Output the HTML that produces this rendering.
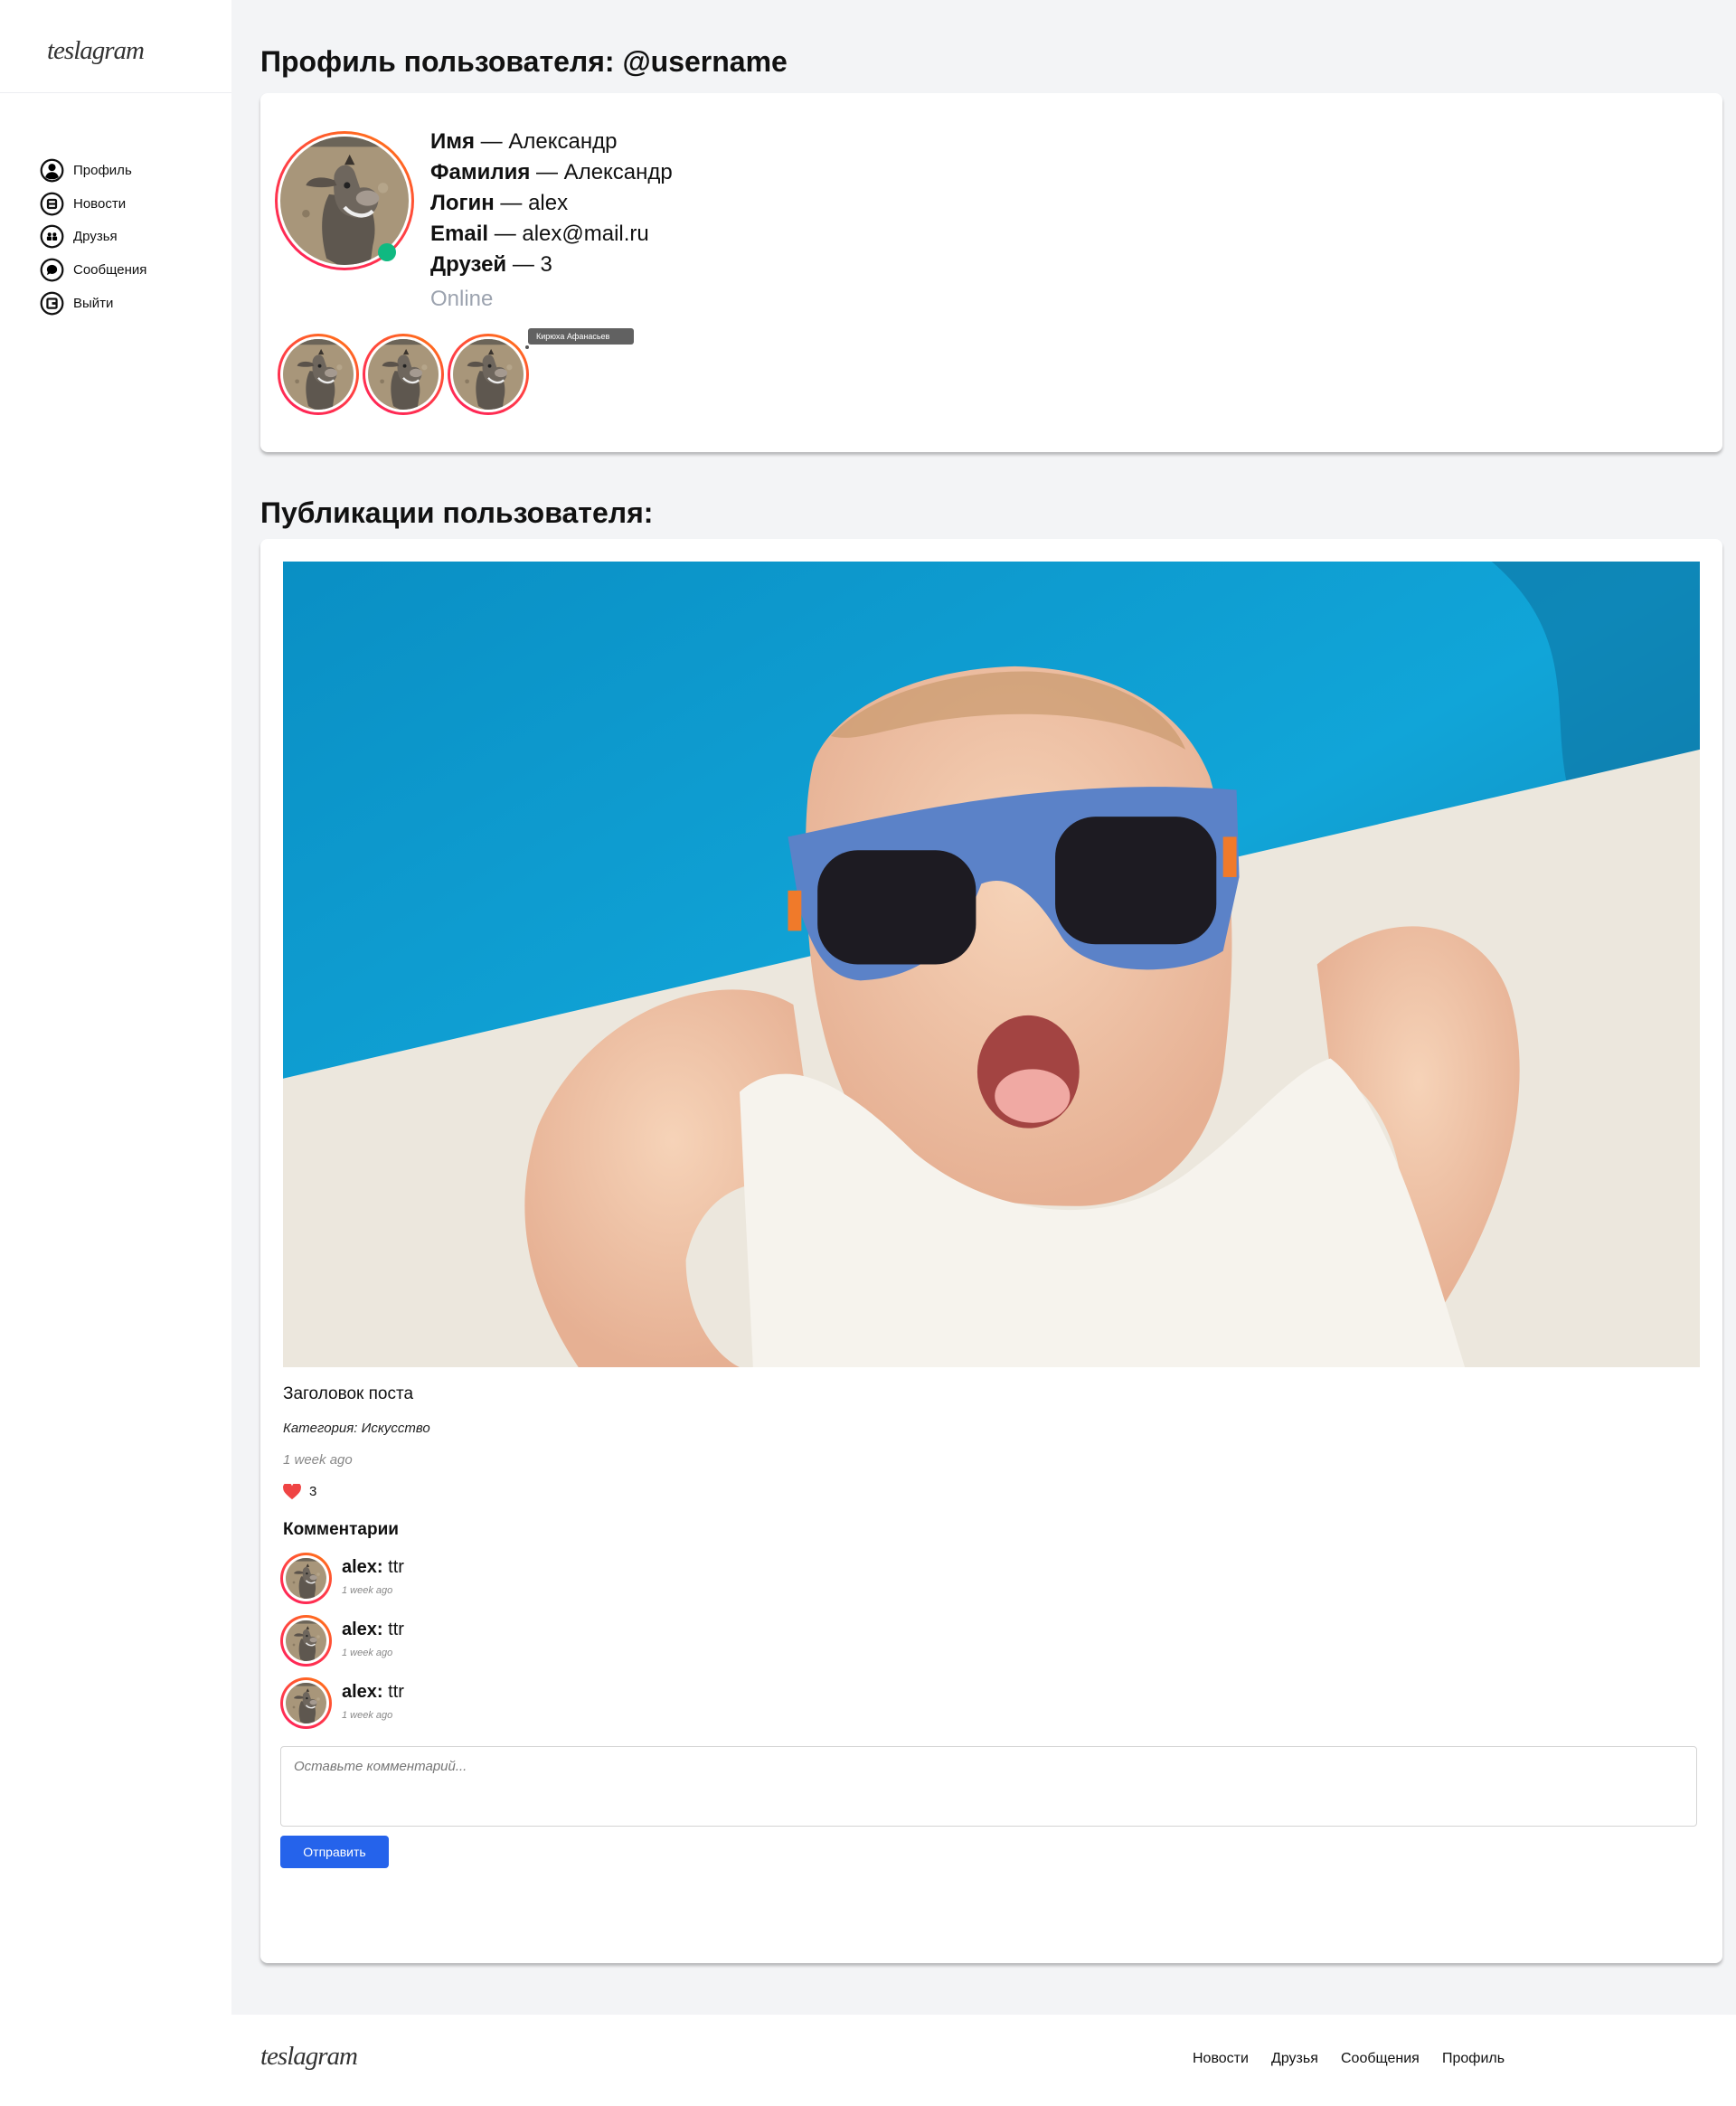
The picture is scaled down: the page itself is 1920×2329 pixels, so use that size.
<!DOCTYPE html>
<html><head><meta charset="utf-8">
<style>
*{box-sizing:border-box;margin:0;padding:0}
body{width:1920px;height:2329px;background:#fff;font-family:"Liberation Sans","DejaVu Sans",sans-serif;color:#111;position:relative;overflow:hidden}
.abs{position:absolute}
.side{left:0;top:0;width:256px;height:2228px;background:#fff}
.main{left:256px;top:0;width:1664px;height:2228px;background:#f3f4f6}
.logo{font-family:"Liberation Serif",serif;font-style:italic;font-size:29px;letter-spacing:-1px;color:#333}
.nav{left:44px;font-size:15px;display:flex;align-items:center;height:28px}
.nav svg{width:27px;height:27px;margin-right:10px}
.card{background:#fff;border-radius:8px;box-shadow:0 3px 3px rgba(0,0,0,.25)}
h1{font-size:32px;font-weight:bold}
.info{left:476px;font-size:24px;line-height:34px}
.info b{font-weight:bold}
.ring{border-radius:50%;background:linear-gradient(30deg,#ff1f5a 0%,#ff3a4a 45%,#ff7a10 100%);padding:3px}
.ring .in{width:100%;height:100%;border-radius:50%;background:#fff;padding:3px}
.ring svg{width:100%;height:100%;border-radius:50%;display:block}
</style></head><body>
<svg width="0" height="0" style="position:absolute">
<defs>
<symbol id="don" viewBox="0 0 100 100">
<rect width="100" height="100" fill="#a8967a"/>
<rect y="0" width="100" height="8" fill="#6b6458"/>
<circle cx="20" cy="60" r="3" fill="#8a7a62"/><circle cx="80" cy="40" r="4" fill="#b5a58a"/>
<path d="M38 45 C30 60 32 80 36 95 L45 100 L70 100 L72 85 C76 70 72 55 66 48 Z" fill="#5e574f"/>
<path d="M42 30 C45 20 55 20 58 28 L62 40 C70 38 78 44 76 52 C74 62 62 66 54 62 C46 60 40 52 42 30Z" fill="#6e665d"/>
<path d="M42 34 C32 30 22 32 20 38 C28 40 36 40 44 38Z" fill="#5a524a"/>
<ellipse cx="68" cy="48" rx="9" ry="6" fill="#a59a90"/>
<path d="M50 55 C56 62 66 64 72 58" stroke="#eee" stroke-width="3" fill="none"/>
<circle cx="52" cy="38" r="2.5" fill="#222"/>
<path d="M50 22 L54 14 L58 22Z" fill="#3a342e"/>
</symbol>
</defs></svg>

<div class="abs side">
<div class="abs logo" style="left:52px;top:40px">teslagram</div>
<div class="abs" style="left:0;top:102px;width:256px;height:1px;background:#eceef1"></div>
<div class="abs nav" style="top:174px"><svg viewBox="0 0 24 24"><circle cx="12" cy="12" r="10.5" fill="none" stroke="#111" stroke-width="2"/><circle cx="12" cy="9" r="3.6"/><path d="M5.5 18.5c1-3.5 3.5-5 6.5-5s5.5 1.5 6.5 5c-2 1.6-4 2.2-6.5 2.2s-4.5-.6-6.5-2.2z"/></svg>Профиль</div>
<div class="abs nav" style="top:211px"><svg viewBox="0 0 24 24"><circle cx="12" cy="12" r="10.5" fill="none" stroke="#111" stroke-width="2"/><rect x="8" y="8" width="8" height="8" rx="1" fill="none" stroke="#111" stroke-width="2"/><path d="M8 12h8" stroke="#111" stroke-width="2"/></svg>Новости</div>
<div class="abs nav" style="top:247px"><svg viewBox="0 0 24 24"><circle cx="12" cy="12" r="10.5" fill="none" stroke="#111" stroke-width="2"/><circle cx="9.5" cy="10" r="1.8"/><circle cx="14.5" cy="10" r="1.8"/><rect x="7" y="12" width="4.5" height="4" rx="1"/><rect x="12.5" y="12" width="4.5" height="4" rx="1"/></svg>Друзья</div>
<div class="abs nav" style="top:284px"><svg viewBox="0 0 24 24"><circle cx="12" cy="12" r="10.5" fill="none" stroke="#111" stroke-width="2"/><ellipse cx="12" cy="11.5" rx="5" ry="4.5"/><path d="M8 14l-1 3 4-2z"/></svg>Сообщения</div>
<div class="abs nav" style="top:321px"><svg viewBox="0 0 24 24"><circle cx="12" cy="12" r="10.5" fill="none" stroke="#111" stroke-width="2"/><rect x="7.5" y="7.5" width="9" height="9" rx="1" fill="none" stroke="#111" stroke-width="2"/><path d="M12 12h5" stroke="#111" stroke-width="2.5"/></svg>Выйти</div>
</div>

<div class="abs main"></div>

<h1 class="abs" style="left:288px;top:50px">Профиль пользователя: @username</h1>
<div class="abs card" style="left:288px;top:103px;width:1617px;height:397px"></div>
<div class="abs ring" style="left:304px;top:145px;width:154px;height:154px"><div class="in"><svg><use href="#don"/></svg></div></div>
<div class="abs" style="left:418px;top:269px;width:20px;height:20px;border-radius:50%;background:#10b981"></div>
<div class="abs info" style="top:140px"><b>Имя</b> — Александр<br><b>Фамилия</b> — Александр<br><b>Логин</b> — alex<br><b>Email</b> — alex@mail.ru<br><b>Друзей</b> — 3</div>
<div class="abs" style="left:476px;top:317px;font-size:24px;color:#9ca3af">Online</div>
<div class="abs ring" style="left:307px;top:369px;width:90px;height:90px"><div class="in"><svg><use href="#don"/></svg></div></div>
<div class="abs ring" style="left:401px;top:369px;width:90px;height:90px"><div class="in"><svg><use href="#don"/></svg></div></div>
<div class="abs ring" style="left:495px;top:369px;width:90px;height:90px"><div class="in"><svg><use href="#don"/></svg></div></div>
<div class="abs" style="left:581px;top:382px;width:4px;height:4px;border-radius:50%;background:#555"></div>
<div class="abs" style="left:584px;top:363px;width:117px;height:18px;background:#616161;border-radius:3px;color:#fff;font-size:9px;line-height:18px;padding-left:9px">Кирюха Афанасьев</div>

<h1 class="abs" style="left:288px;top:549px">Публикации пользователя:</h1>
<div class="abs card" style="left:288px;top:596px;width:1617px;height:1575px"></div>
<svg class="abs" style="left:313px;top:621px" width="1567" height="891" viewBox="0 0 1055 600" preserveAspectRatio="none">
<defs><linearGradient id="pool" x1="0" y1="0" x2="1" y2="1"><stop offset="0" stop-color="#0a8fc4"/><stop offset=".5" stop-color="#11a5d8"/><stop offset="1" stop-color="#1076a8"/></linearGradient>
<radialGradient id="skin" cx=".5" cy=".4" r=".6"><stop offset="0" stop-color="#f6d3b8"/><stop offset="1" stop-color="#e6b093"/></radialGradient></defs>
<rect width="1055" height="600" fill="url(#pool)"/>
<path d="M900 0 L1055 0 L1055 150 L960 180 C940 120 970 60 900 0Z" fill="#0b6a98" opacity=".5"/>
<path d="M0 385 L1055 140 L1055 600 L0 600Z" fill="#ece7dd"/>
<path d="M190 420 C230 330 330 300 380 330 L400 470 C350 450 310 470 300 520 C300 560 320 590 340 600 L220 600 C180 540 170 480 190 420Z" fill="url(#skin)"/>
<path d="M770 300 C830 250 900 270 915 330 C935 410 900 500 860 560 L820 560 C850 480 830 400 780 380Z" fill="url(#skin)"/>
<path d="M395 150 C410 110 470 80 545 78 C620 80 670 110 690 160 C710 230 710 300 700 380 C690 440 650 480 590 480 C530 480 460 470 430 420 C400 370 390 300 390 240 C388 200 390 170 395 150Z" fill="url(#skin)"/>
<path d="M408 130 C440 95 510 80 560 82 C620 86 660 110 672 140 C630 115 560 108 490 118 C450 124 425 135 408 130Z" fill="#c99a6e" opacity=".7"/>
<path d="M340 395 C380 360 430 400 470 440 C530 490 620 500 680 450 C720 420 750 380 780 370 C820 400 850 500 880 600 L350 600Z" fill="#f6f3ed"/>
<path d="M376 205 C470 185 580 160 710 170 L712 235 L700 290 C670 310 600 310 580 280 C565 255 545 230 520 240 C505 280 480 310 430 312 C405 310 395 290 385 260Z" fill="#5b82c8"/>
<rect x="398" y="215" width="118" height="85" rx="30" fill="#1d1b22"/>
<rect x="575" y="190" width="120" height="95" rx="30" fill="#1d1b22"/>
<rect x="376" y="245" width="10" height="30" fill="#f07a2a"/><rect x="700" y="205" width="10" height="30" fill="#f07a2a"/>
<ellipse cx="555" cy="380" rx="38" ry="42" fill="#a34442"/>
<ellipse cx="558" cy="398" rx="28" ry="20" fill="#f0a9a3"/>
</svg>

<div class="abs" style="left:313px;top:1531px;font-size:19px">Заголовок поста</div>
<div class="abs" style="left:313px;top:1571px;font-size:15px;font-style:italic;color:#222">Категория: Искусство</div>
<div class="abs" style="left:313px;top:1606px;font-size:15px;font-style:italic;color:#888">1 week ago</div>
<svg class="abs" style="left:313px;top:1641px" width="20" height="18" viewBox="0 0 24 22"><path d="M12 21C5 15 0 11 0 6A6 6 0 0 1 12 3 6 6 0 0 1 24 6c0 5-5 9-12 15z" fill="#ef4444"/></svg>
<div class="abs" style="left:342px;top:1641px;font-size:15px">3</div>
<div class="abs" style="left:313px;top:1681px;font-size:19px;font-weight:bold">Комментарии</div>

<div class="abs ring" style="left:310px;top:1717px;width:57px;height:57px"><div class="in"><svg><use href="#don"/></svg></div></div>
<div class="abs" style="left:378px;top:1722px;font-size:20px"><b>alex:</b> ttr</div>
<div class="abs" style="left:378px;top:1753px;font-size:11px;font-style:italic;color:#888">1 week ago</div>
<div class="abs ring" style="left:310px;top:1786px;width:57px;height:57px"><div class="in"><svg><use href="#don"/></svg></div></div>
<div class="abs" style="left:378px;top:1791px;font-size:20px"><b>alex:</b> ttr</div>
<div class="abs" style="left:378px;top:1822px;font-size:11px;font-style:italic;color:#888">1 week ago</div>
<div class="abs ring" style="left:310px;top:1855px;width:57px;height:57px"><div class="in"><svg><use href="#don"/></svg></div></div>
<div class="abs" style="left:378px;top:1860px;font-size:20px"><b>alex:</b> ttr</div>
<div class="abs" style="left:378px;top:1891px;font-size:11px;font-style:italic;color:#888">1 week ago</div>

<div class="abs" style="left:310px;top:1931px;width:1567px;height:89px;border:1px solid #d4d4d4;border-radius:4px;padding:13px 14px;font-size:15px;font-style:italic;color:#777">Оставьте комментарий...</div>
<div class="abs" style="left:310px;top:2030px;width:120px;height:36px;background:#2563eb;border-radius:4px;color:#fff;font-size:14px;line-height:36px;text-align:center">Отправить</div>

<div class="abs logo" style="left:288px;top:2258px">teslagram</div>
<div class="abs" style="left:1319px;top:2268px;font-size:16px">Новости</div>
<div class="abs" style="left:1406px;top:2268px;font-size:16px">Друзья</div>
<div class="abs" style="left:1483px;top:2268px;font-size:16px">Сообщения</div>
<div class="abs" style="left:1595px;top:2268px;font-size:16px">Профиль</div>
</body></html>
